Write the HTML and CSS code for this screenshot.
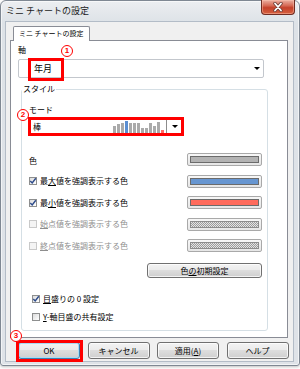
FILE: index.html
```html
<!DOCTYPE html>
<html lang="ja">
<head>
<meta charset="utf-8">
<title>ミニ チャートの設定</title>
<link rel="stylesheet" href="styles.css">
</head>
<body>
<div class="window">
  <div class="titlebar">
    <span class="title">ミニ チャートの設定</span>
    <div class="close">
      <svg width="12" height="10" viewBox="0 0 12 10">
        <path d="M3 1.5 L9 8.5 M9 1.5 L3 8.5" stroke="#6a3a33" stroke-width="3.4" stroke-linecap="round" fill="none"/>
        <path d="M3 1.5 L9 8.5 M9 1.5 L3 8.5" stroke="#ffffff" stroke-width="1.8" stroke-linecap="round" fill="none"/>
      </svg>
    </div>
  </div>
  <div class="client">
    <div class="tabstrip"><div class="tab">ミニ チャートの設定</div></div>
    <div class="panel">
      <div class="label">軸</div>
      <div class="combo axis-combo"><span class="combo-text big">年月</span><span class="arrow"></span></div>
      <div class="group">
        <div class="legend">スタイル</div>
        <div class="label mode-label">モード</div>
        <div class="combo mode-combo">
          <span class="combo-text">棒</span>
          <span class="spark">
            <i style="height:7px"></i><i style="height:9px"></i><i style="height:10px"></i><i class="hi" style="height:12px"></i><i style="height:10px"></i><i style="height:10px"></i><i style="height:10px"></i><i style="height:5px"></i><i style="height:5px"></i><i style="height:10px"></i><i style="height:7px"></i><i style="height:11px"></i><i class="lo" style="height:3px"></i>
          </span>
          <span class="sep"></span>
          <span class="arrow"></span>
        </div>
        <div class="color-rows">
          <div class="row"><span class="row-label low">色</span><span class="swatch"><span class="fill gray"></span></span></div>
          <div class="row"><span class="cb on"><svg width="8" height="8" viewBox="0 0 8 8"><path d="M1.3 4 L3.2 6 L6.8 1.3" stroke="#2c4a8a" stroke-width="1.4" fill="none"/></svg></span><span class="row-label">最<u>大</u>値を強調表示する色</span><span class="swatch"><span class="fill blue"></span></span></div>
          <div class="row"><span class="cb on"><svg width="8" height="8" viewBox="0 0 8 8"><path d="M1.3 4 L3.2 6 L6.8 1.3" stroke="#2c4a8a" stroke-width="1.4" fill="none"/></svg></span><span class="row-label">最<u>小</u>値を強調表示する色</span><span class="swatch"><span class="fill red"></span></span></div>
          <div class="row disabled"><span class="cb"></span><span class="row-label"><u>始</u>点値を強調表示する色</span><span class="swatch"><span class="fill hatch"></span></span></div>
          <div class="row disabled"><span class="cb"></span><span class="row-label"><u>終</u>点値を強調表示する色</span><span class="swatch"><span class="fill hatch"></span></span></div>
        </div>
        <button class="btn reset">色<u>の</u>初期設定</button>
        <div class="checks">
          <div class="check-row"><span class="cb on"><svg width="8" height="8" viewBox="0 0 8 8"><path d="M1.3 4 L3.2 6 L6.8 1.3" stroke="#2c4a8a" stroke-width="1.4" fill="none"/></svg></span><span><u>目</u>盛りの 0 設定</span></div>
          <div class="check-row"><span class="cb"></span><span><u>Y</u>-軸目盛の共有設定</span></div>
        </div>
      </div>
    </div>
    <div class="buttons">
      <button class="btn default">OK</button>
      <button class="btn">キャンセル</button>
      <button class="btn">適用(<u>A</u>)</button>
      <button class="btn">ヘルプ</button>
    </div>
  </div>

  <div class="mark mark-axis"></div>
  <div class="mark mark-mode"></div>
  <div class="mark mark-ok"></div>
  <div class="num num-1">1</div>
  <div class="num num-2">2</div>
  <div class="num num-3">3</div>
</div>
</body>
</html>
```

FILE: styles.css
```css
* { box-sizing: border-box; }
html, body { margin: 0; padding: 0; }
body {
  width: 300px;
  height: 369px;
  overflow: hidden;
  background: #ffffff;
  font-family: "Noto Sans CJK JP", "Noto Sans", sans-serif;
  font-size: 8px;
  line-height: 10px;
  color: #000;
}
u { text-decoration: underline; text-underline-offset: 1px; }

.window {
  position: relative;
  width: 300px;
  height: 366px;
  border: 1px solid #7f8893;
  border-radius: 6px 6px 3px 3px;
  background: linear-gradient(#eceef1, #dde2e7 22px, #dfe3e8);
  box-shadow: inset 0 0 0 1px rgba(255,255,255,0.6), 0 1px 3px rgba(0,0,0,0.25);
}

.titlebar {
  display: flex;
  align-items: flex-start;
  height: 20px;
}
.title {
  flex: 1;
  font-size: 9px;
  line-height: 12px;
  padding: 4px 0 0 5px;
  color: #1a1a1a;
}
.close {
  width: 34px;
  height: 15px;
  margin-top: -1px;
  margin-right: 4px;
  display: flex;
  align-items: center;
  justify-content: center;
  border: 1px solid #6f2c22;
  border-top: none;
  border-radius: 0 0 4px 4px;
  background: linear-gradient(#eab0a2, #d66a55 40%, #c4412b 55%, #d6613f);
  box-shadow: inset 0 0 0 1px rgba(255,200,180,0.45);
}

.client {
  margin-left: 4px;
  width: 289px;
  height: 341px;
  border: 1px solid #b3bcc7;
  background: #f0f0f0;
}

.tabstrip {
  height: 15px;
  margin-top: 4px;
  padding-left: 7px;
}
.tab {
  position: relative;
  z-index: 1;
  display: inline-block;
  height: 15px;
  padding: 0 5px;
  border: 1px solid #898c95;
  border-bottom: none;
  border-radius: 2px 2px 0 0;
  background: #fff;
  font-size: 7px;
  line-height: 13px;
}

.panel {
  margin-top: -1px;
  margin-left: 4px;
  width: 278px;
  height: 298px;
  border: 1px solid #898c95;
  background: #fff;
  padding: 4px 0 0 7px;
}

.label { line-height: 10px; }

.combo {
  display: flex;
  align-items: center;
  background: #fff;
  border: 1px solid #c3c7cd;
  border-radius: 2px;
}
.combo-text { line-height: 10px; }
.combo-text.big { font-size: 9px; }
.arrow {
  width: 0;
  height: 0;
  border-left: 3px solid transparent;
  border-right: 3px solid transparent;
  border-top: 3px solid #000;
}

.axis-combo {
  margin-top: 4px;
  width: 246px;
  height: 19px;
  padding-left: 15px;
}
.axis-combo .arrow { margin-left: auto; margin-right: 3px; }

.group {
  margin-top: 11px;
  margin-left: 3px;
  width: 247px;
  height: 242px;
  border: 1px solid #d5dfe5;
  border-radius: 3px;
}
.legend {
  width: fit-content;
  margin-top: -6px;
  padding: 0 1px;
  background: #fff;
  line-height: 10px;
}

.mode-label { margin-top: 11px; margin-left: 7px; }

.mode-combo {
  margin-top: 3px;
  margin-left: 7px;
  width: 154px;
  height: 17px;
  padding-left: 3px;
}
.spark {
  margin-left: auto;
  align-self: flex-end;
  margin-bottom: 1px;
  display: flex;
  align-items: flex-end;
  gap: 1px;
}
.spark i {
  display: block;
  width: 3px;
  background: #aaaaaa;
}
.spark i.hi { background: #5b8fd2; }
.spark i.lo { background: #ff6b66; }
.sep {
  align-self: stretch;
  width: 1px;
  margin: 1px 5px 1px 2px;
  background: #8c8c8c;
}
.mode-combo .arrow { margin-right: 4px; }

.color-rows {
  margin-top: 18px;
  display: flex;
  flex-direction: column;
  gap: 8.5px;
}
.row {
  display: flex;
  align-items: center;
  height: 13px;
  padding: 0 5px 0 7px;
}
.row-label { flex: 1; line-height: 10px; }
.row-label.low { align-self: flex-end; }
.row.disabled .row-label { color: #8e8e8e; }

.cb {
  display: inline-flex;
  align-items: center;
  justify-content: center;
  width: 8px;
  height: 8px;
  margin-right: 3px;
  border: 1px solid #8e8f8f;
  background: linear-gradient(135deg, #dcdcdc, #ffffff);
  flex: none;
}
.cb svg { display: block; margin: -1px; }
.row.disabled .cb {
  border-color: #c9c9c9;
  background: #f4f4f4;
}

.swatch {
  width: 75px;
  height: 13px;
  padding: 2px;
  border: 1px solid #a9a9a9;
  border-radius: 2px;
  background: linear-gradient(#f7f7f7, #e6e6e6);
  display: flex;
}
.fill {
  flex: 1;
  border: 1px solid #6b6b6b;
}
.fill.gray { background: #b3b3b3; }
.fill.blue { background: #6796d1; }
.fill.red { background: #ff6b5c; }
.fill.hatch {
  border-color: #8c8c8c;
  background: repeating-conic-gradient(#9b9b9b 0 25%, #e4e4e4 0 50%) 0 0 / 2px 2px;
}

.btn {
  font-family: inherit;
  font-size: 8px;
  color: #000;
  padding: 0;
  border: 1px solid #707070;
  border-radius: 3px;
  background: linear-gradient(#f3f3f3, #ebebeb 45%, #dddddd 50%, #cfcfcf);
  box-shadow: inset 0 0 0 1px rgba(255,255,255,0.75);
  line-height: 13px;
}
.reset {
  display: block;
  margin: 11px 5px 0 auto;
  width: 115px;
  height: 15px;
}

.checks {
  margin-top: 16px;
  display: flex;
  flex-direction: column;
  gap: 8px;
}
.check-row {
  display: flex;
  align-items: center;
  height: 10px;
  padding-left: 10px;
}

.buttons {
  display: flex;
  gap: 7.5px;
  margin-top: 4px;
  padding-left: 12px;
}
.buttons .btn {
  width: 62px;
  height: 17px;
  line-height: 15px;
}
.btn.default {
  border-color: #3c7fb1;
  box-shadow: inset 0 0 0 1px #a8dcf5;
}

.mark {
  position: absolute;
  border: 3px solid #ff0000;
}
.mark-axis { left: 27px; top: 57px; width: 36px; height: 23px; }
.mark-mode { left: 27px; top: 116px; width: 156px; height: 19px; }
.mark-ok { left: 15px; top: 339px; width: 67px; height: 22px; }

.num {
  position: absolute;
  width: 12px;
  height: 12px;
  border: 1.5px solid #ff0000;
  border-radius: 50%;
  background: #fff;
  color: #ff0000;
  font-family: "Liberation Sans", sans-serif;
  font-weight: bold;
  font-size: 8px;
  line-height: 9px;
  text-align: center;
}
.num-1 { left: 60px; top: 44px; }
.num-2 { left: 16px; top: 108px; }
.num-3 { left: 9px; top: 329px; }
```
